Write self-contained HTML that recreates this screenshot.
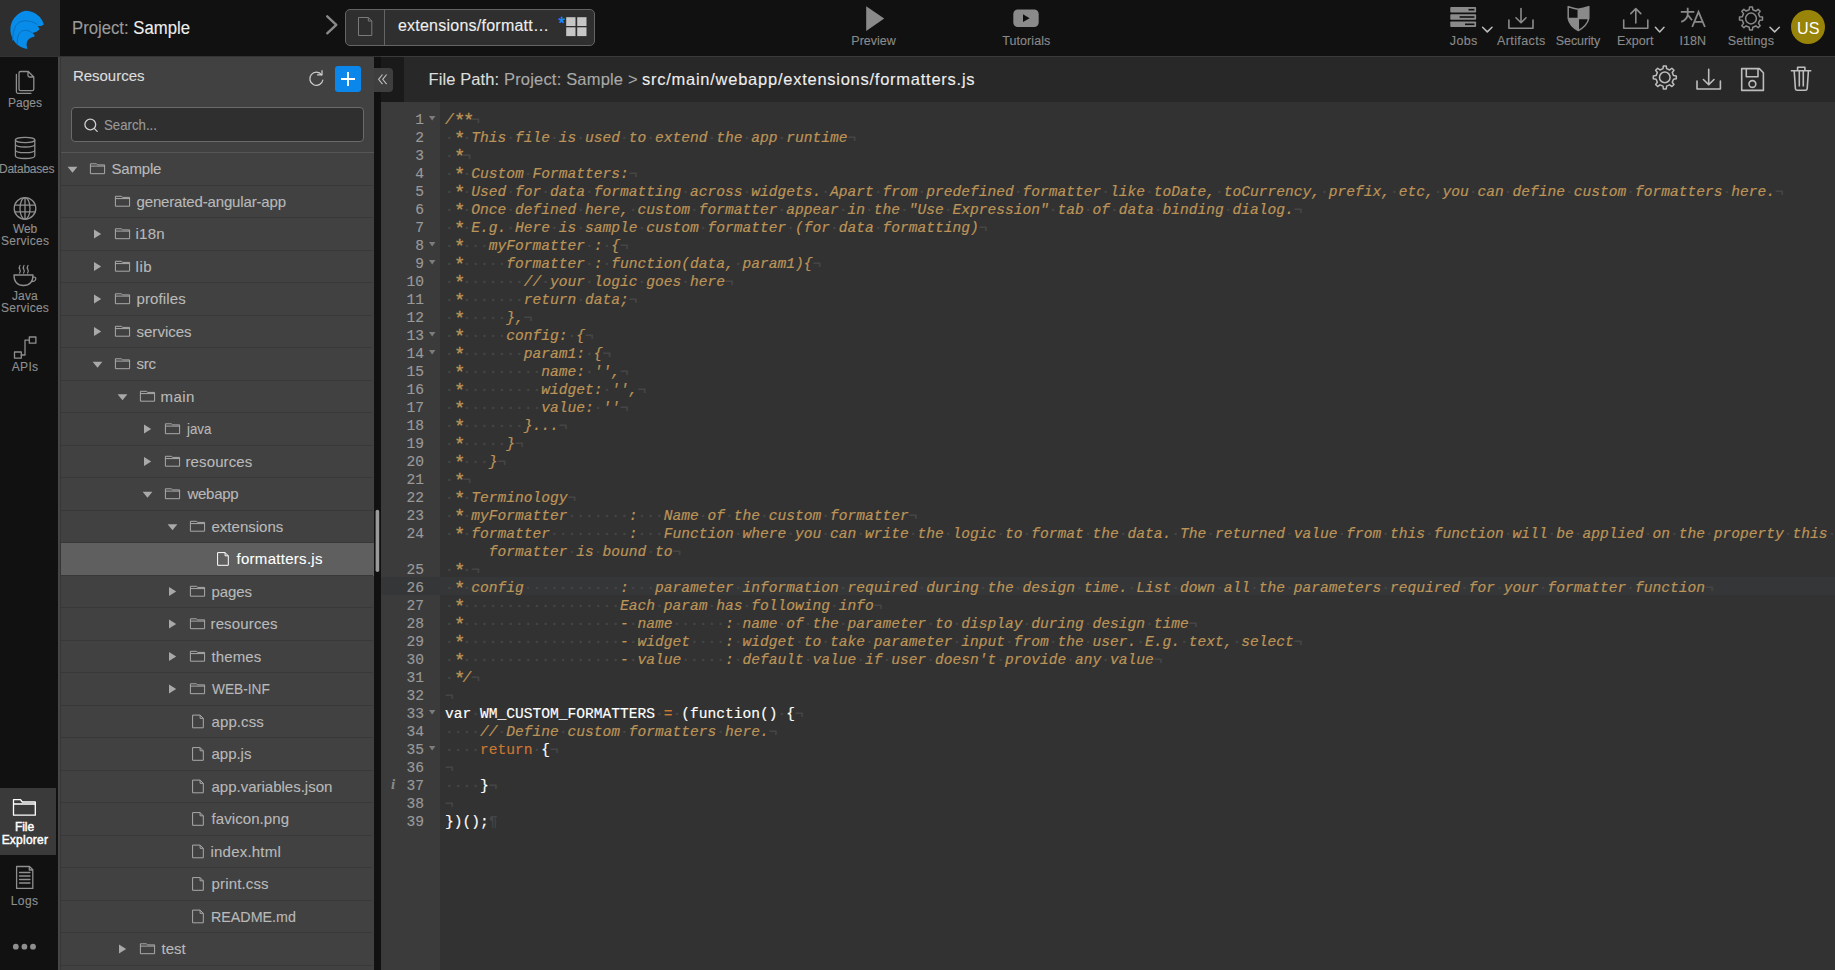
<!DOCTYPE html><html><head><meta charset="utf-8"><style>
html,body{margin:0;padding:0}
body{width:1835px;height:970px;overflow:hidden;position:relative;background:#111;font-family:"Liberation Sans",sans-serif}
body>div,body>svg{position:absolute}
.t{white-space:pre;line-height:1;-webkit-text-stroke:0.12px currentColor}
.c{position:absolute;left:445px;white-space:pre;font-family:"Liberation Mono",monospace;font-size:14.58px;line-height:18px;height:18px;color:#fff;-webkit-text-stroke:0.15px currentColor}
.cm{color:#BC9458;font-style:italic;-webkit-text-stroke:0.2px #BC9458}
.kw{color:#CC7833;-webkit-text-stroke:0.15px #CC7833}
.iv{color:#454545;font-style:normal;font-weight:bold;-webkit-text-stroke:0}
.as{display:inline-block;width:8.75px;font-style:normal;transform:translate(1.3px,1px) scale(1.3)}
.ln{position:absolute;left:381px;width:43px;text-align:right;font-family:"Liberation Mono",monospace;font-size:14.58px;line-height:18px;height:18px;color:#999;-webkit-text-stroke:0.15px #999}
</style></head><body>
<div style="left:0px;top:0px;width:1835px;height:56px;background:#111111;"></div>
<div style="left:0px;top:0px;width:60px;height:56px;background:#2e2e2e;"></div>
<div style="left:0px;top:56px;width:1835px;height:1px;background:#333333;"></div>
<div style="left:381px;top:56px;width:1454px;height:1px;background:#3a3a3a;"></div>
<div style="left:0px;top:57px;width:58px;height:913px;background:#111111;"></div>
<div style="left:58px;top:57px;width:2px;height:913px;background:#464646;"></div>
<div style="left:60px;top:57px;width:314px;height:913px;background:#414141;"></div>
<div style="left:60px;top:57px;width:1px;height:913px;background:#363636;"></div>
<div style="left:374px;top:57px;width:7px;height:913px;background:#111111;"></div>
<div style="left:381px;top:57px;width:23px;height:45px;background:#1a1a1a;"></div>
<div style="left:404px;top:57px;width:1431px;height:45px;background:#282828;"></div>
<div style="left:381px;top:102px;width:59px;height:868px;background:#3b3b3b;"></div>
<div style="left:440px;top:102px;width:1395px;height:868px;background:#323232;"></div>
<div class="t" style="left:72.07px;top:18.56px;font-size:18px;color:#eeeeee;letter-spacing:0.000px;transform:scaleX(0.9282);transform-origin:0 0;"><span style="color:#9a9a9a">Project: </span>Sample</div>
<div style="left:345px;top:9px;width:248px;height:35px;border:1px solid #646464;border-radius:5px;background:#2f2f2f;box-sizing:content-box"></div>
<div style="left:384px;top:10px;width:1px;height:35px;background:#646464;"></div>
<div class="t" style="left:397.90px;top:18.16px;font-size:16px;color:#eeeeee;letter-spacing:0.243px;">extensions/formatt…</div>
<div class="t" style="left:851.30px;top:35.22px;font-size:12.5px;color:#8a8a8a;letter-spacing:0.012px;">Preview</div>
<div class="t" style="left:1002.20px;top:35.22px;font-size:12.5px;color:#8a8a8a;letter-spacing:0.085px;">Tutorials</div>
<div class="t" style="left:1449.80px;top:34.92px;font-size:12.5px;color:#8a8a8a;letter-spacing:0.349px;">Jobs</div>
<div class="t" style="left:1497.00px;top:34.92px;font-size:12.5px;color:#8a8a8a;letter-spacing:0.388px;">Artifacts</div>
<div class="t" style="left:1555.80px;top:34.92px;font-size:12.5px;color:#8a8a8a;letter-spacing:-0.101px;">Security</div>
<div class="t" style="left:1617.00px;top:34.92px;font-size:12.5px;color:#8a8a8a;letter-spacing:0.069px;">Export</div>
<div class="t" style="left:1679.50px;top:34.92px;font-size:12.5px;color:#8a8a8a;letter-spacing:0.041px;">I18N</div>
<div class="t" style="left:1727.70px;top:34.92px;font-size:12.5px;color:#8a8a8a;letter-spacing:0.155px;">Settings</div>
<div style="left:1791px;top:10px;width:34px;height:34px;border-radius:50%;background:#988408"></div>
<div class="t" style="left:1796.62px;top:19.73px;font-size:16.5px;color:#ffffff;letter-spacing:0.000px;transform:scaleX(0.9765);transform-origin:0 0;-webkit-text-stroke:0">US</div>
<div class="t" style="left:72.90px;top:68.40px;font-size:15px;color:#dddddd;letter-spacing:-0.012px;">Resources</div>
<div style="left:71px;top:107px;width:291px;height:33px;border:1px solid #6a6a6a;border-radius:4px;background:#2f2f2f"></div>
<div class="t" style="left:104.00px;top:117.73px;font-size:14.5px;color:#9a9a9a;letter-spacing:0.000px;transform:scaleX(0.9123);transform-origin:0 0;">Search...</div>
<div style="left:335px;top:66px;width:26px;height:26px;border-radius:3px;background:#0b86ea"></div>
<div style="left:374px;top:68px;width:19px;height:24px;border-radius:0 4px 4px 0;background:#3e3e3e"></div>
<div style="left:61px;top:152px;width:313px;height:1px;background:#555555;"></div>
<div class="t" style="left:428.50px;top:70.83px;font-size:16.5px;color:#dddddd;letter-spacing:0.110px;">File Path:</div>
<div class="t" style="left:504.00px;top:70.83px;font-size:16.5px;color:#a8a8a8;letter-spacing:0.184px;">Project: Sample &gt;</div>
<div class="t" style="left:642.00px;top:70.83px;font-size:16.5px;color:#eeeeee;letter-spacing:0.744px;">src/main/webapp/extensions/formatters.js</div>
<div class="t" style="left:8.00px;top:96.84px;font-size:12px;color:#8f8f8f;letter-spacing:-0.006px;">Pages</div>
<div class="t" style="left:-1.00px;top:162.74px;font-size:12px;color:#8f8f8f;letter-spacing:-0.234px;">Databases</div>
<div class="t" style="left:13.00px;top:222.74px;font-size:12px;color:#8f8f8f;letter-spacing:-0.192px;">Web</div>
<div class="t" style="left:0.90px;top:234.64px;font-size:12px;color:#8f8f8f;letter-spacing:0.298px;">Services</div>
<div class="t" style="left:12.00px;top:290.04px;font-size:12px;color:#8f8f8f;letter-spacing:0.109px;">Java</div>
<div class="t" style="left:1.10px;top:301.84px;font-size:12px;color:#8f8f8f;letter-spacing:0.241px;">Services</div>
<div class="t" style="left:11.80px;top:361.44px;font-size:12px;color:#8f8f8f;letter-spacing:0.286px;">APIs</div>
<div style="left:0px;top:788px;width:56px;height:67px;background:#3a3a3a;"></div>
<div class="t" style="left:14.90px;top:821.44px;font-size:12px;color:#ffffff;letter-spacing:-0.021px;-webkit-text-stroke:0.45px #fff">File</div>
<div class="t" style="left:1.65px;top:833.74px;font-size:12px;color:#ffffff;letter-spacing:0.223px;-webkit-text-stroke:0.45px #fff">Explorer</div>
<div class="t" style="left:10.70px;top:894.84px;font-size:12px;color:#8f8f8f;letter-spacing:0.426px;">Logs</div>
<div style="left:61px;top:185px;width:312px;height:1px;background:#383838;"></div>
<div class="t" style="left:111.50px;top:161.10px;font-size:15px;color:#b9b9b9;letter-spacing:-0.183px;">Sample</div>
<div style="left:61px;top:217px;width:312px;height:1px;background:#383838;"></div>
<div class="t" style="left:136.50px;top:193.60px;font-size:15px;color:#b9b9b9;letter-spacing:-0.154px;">generated-angular-app</div>
<div style="left:61px;top:250px;width:312px;height:1px;background:#383838;"></div>
<div class="t" style="left:135.50px;top:226.10px;font-size:15px;color:#b9b9b9;letter-spacing:0.261px;">i18n</div>
<div style="left:61px;top:282px;width:312px;height:1px;background:#383838;"></div>
<div class="t" style="left:135.50px;top:258.60px;font-size:15px;color:#b9b9b9;letter-spacing:0.567px;">lib</div>
<div style="left:61px;top:315px;width:312px;height:1px;background:#383838;"></div>
<div class="t" style="left:136.50px;top:291.10px;font-size:15px;color:#b9b9b9;letter-spacing:0.121px;">profiles</div>
<div style="left:61px;top:347px;width:312px;height:1px;background:#383838;"></div>
<div class="t" style="left:136.50px;top:323.60px;font-size:15px;color:#b9b9b9;letter-spacing:0.013px;">services</div>
<div style="left:61px;top:380px;width:312px;height:1px;background:#383838;"></div>
<div class="t" style="left:136.50px;top:356.10px;font-size:15px;color:#b9b9b9;letter-spacing:-0.298px;">src</div>
<div style="left:61px;top:412px;width:312px;height:1px;background:#383838;"></div>
<div class="t" style="left:160.50px;top:388.60px;font-size:15px;color:#b9b9b9;letter-spacing:0.477px;">main</div>
<div style="left:61px;top:445px;width:312px;height:1px;background:#383838;"></div>
<div class="t" style="left:187.38px;top:421.10px;font-size:15px;color:#b9b9b9;letter-spacing:0.000px;transform:scaleX(0.8843);transform-origin:0 0;">java</div>
<div style="left:61px;top:477px;width:312px;height:1px;background:#383838;"></div>
<div class="t" style="left:185.50px;top:453.60px;font-size:15px;color:#b9b9b9;letter-spacing:0.118px;">resources</div>
<div style="left:61px;top:510px;width:312px;height:1px;background:#383838;"></div>
<div class="t" style="left:187.50px;top:486.10px;font-size:15px;color:#b9b9b9;letter-spacing:-0.280px;">webapp</div>
<div style="left:61px;top:542px;width:312px;height:1px;background:#383838;"></div>
<div class="t" style="left:211.50px;top:518.60px;font-size:15px;color:#b9b9b9;letter-spacing:0.010px;">extensions</div>
<div style="left:61px;top:543px;width:313px;height:33px;background:#5f5f5f;"></div>
<div style="left:61px;top:575px;width:312px;height:1px;background:#383838;"></div>
<div class="t" style="left:236.50px;top:551.10px;font-size:15px;color:#ffffff;letter-spacing:0.290px;">formatters.js</div>
<div style="left:61px;top:607px;width:312px;height:1px;background:#383838;"></div>
<div class="t" style="left:211.50px;top:583.60px;font-size:15px;color:#b9b9b9;letter-spacing:-0.092px;">pages</div>
<div style="left:61px;top:640px;width:312px;height:1px;background:#383838;"></div>
<div class="t" style="left:210.50px;top:616.10px;font-size:15px;color:#b9b9b9;letter-spacing:0.143px;">resources</div>
<div style="left:61px;top:672px;width:312px;height:1px;background:#383838;"></div>
<div class="t" style="left:211.50px;top:648.60px;font-size:15px;color:#b9b9b9;letter-spacing:0.102px;">themes</div>
<div style="left:61px;top:705px;width:312px;height:1px;background:#383838;"></div>
<div class="t" style="left:211.50px;top:681.10px;font-size:15px;color:#b9b9b9;letter-spacing:0.000px;transform:scaleX(0.9119);transform-origin:0 0;">WEB-INF</div>
<div style="left:61px;top:737px;width:312px;height:1px;background:#383838;"></div>
<div class="t" style="left:211.50px;top:713.60px;font-size:15px;color:#b9b9b9;letter-spacing:0.101px;">app.css</div>
<div style="left:61px;top:770px;width:312px;height:1px;background:#383838;"></div>
<div class="t" style="left:211.50px;top:746.10px;font-size:15px;color:#b9b9b9;letter-spacing:-0.025px;">app.js</div>
<div style="left:61px;top:802px;width:312px;height:1px;background:#383838;"></div>
<div class="t" style="left:211.50px;top:778.60px;font-size:15px;color:#b9b9b9;letter-spacing:-0.004px;">app.variables.json</div>
<div style="left:61px;top:835px;width:312px;height:1px;background:#383838;"></div>
<div class="t" style="left:211.50px;top:811.10px;font-size:15px;color:#b9b9b9;letter-spacing:0.082px;">favicon.png</div>
<div style="left:61px;top:867px;width:312px;height:1px;background:#383838;"></div>
<div class="t" style="left:210.50px;top:843.60px;font-size:15px;color:#b9b9b9;letter-spacing:0.208px;">index.html</div>
<div style="left:61px;top:900px;width:312px;height:1px;background:#383838;"></div>
<div class="t" style="left:211.50px;top:876.10px;font-size:15px;color:#b9b9b9;letter-spacing:0.157px;">print.css</div>
<div style="left:61px;top:932px;width:312px;height:1px;background:#383838;"></div>
<div class="t" style="left:210.55px;top:908.60px;font-size:15px;color:#b9b9b9;letter-spacing:0.000px;transform:scaleX(0.9518);transform-origin:0 0;">README.md</div>
<div style="left:61px;top:965px;width:312px;height:1px;background:#383838;"></div>
<div class="t" style="left:161.50px;top:941.10px;font-size:15px;color:#b9b9b9;letter-spacing:-0.037px;">test</div>
<div class="ln" style="top:111px">1</div>
<div class="c" style="top:111px"><span class="cm">/<i class="as">*</i><i class="as">*</i></span><i class="iv">¬</i></div>
<div class="ln" style="top:129px">2</div>
<div class="c" style="top:129px"><span class="cm"><i class="iv">·</i><i class="as">*</i><i class="iv">·</i>This<i class="iv">·</i>file<i class="iv">·</i>is<i class="iv">·</i>used<i class="iv">·</i>to<i class="iv">·</i>extend<i class="iv">·</i>the<i class="iv">·</i>app<i class="iv">·</i>runtime</span><i class="iv">¬</i></div>
<div class="ln" style="top:147px">3</div>
<div class="c" style="top:147px"><span class="cm"><i class="iv">·</i><i class="as">*</i></span><i class="iv">¬</i></div>
<div class="ln" style="top:165px">4</div>
<div class="c" style="top:165px"><span class="cm"><i class="iv">·</i><i class="as">*</i><i class="iv">·</i>Custom<i class="iv">·</i>Formatters:</span><i class="iv">¬</i></div>
<div class="ln" style="top:183px">5</div>
<div class="c" style="top:183px"><span class="cm"><i class="iv">·</i><i class="as">*</i><i class="iv">·</i>Used<i class="iv">·</i>for<i class="iv">·</i>data<i class="iv">·</i>formatting<i class="iv">·</i>across<i class="iv">·</i>widgets.<i class="iv">·</i>Apart<i class="iv">·</i>from<i class="iv">·</i>predefined<i class="iv">·</i>formatter<i class="iv">·</i>like<i class="iv">·</i>toDate,<i class="iv">·</i>toCurrency,<i class="iv">·</i>prefix,<i class="iv">·</i>etc,<i class="iv">·</i>you<i class="iv">·</i>can<i class="iv">·</i>define<i class="iv">·</i>custom<i class="iv">·</i>formatters<i class="iv">·</i>here.</span><i class="iv">¬</i></div>
<div class="ln" style="top:201px">6</div>
<div class="c" style="top:201px"><span class="cm"><i class="iv">·</i><i class="as">*</i><i class="iv">·</i>Once<i class="iv">·</i>defined<i class="iv">·</i>here,<i class="iv">·</i>custom<i class="iv">·</i>formatter<i class="iv">·</i>appear<i class="iv">·</i>in<i class="iv">·</i>the<i class="iv">·</i>&quot;Use<i class="iv">·</i>Expression&quot;<i class="iv">·</i>tab<i class="iv">·</i>of<i class="iv">·</i>data<i class="iv">·</i>binding<i class="iv">·</i>dialog.</span><i class="iv">¬</i></div>
<div class="ln" style="top:219px">7</div>
<div class="c" style="top:219px"><span class="cm"><i class="iv">·</i><i class="as">*</i><i class="iv">·</i>E.g.<i class="iv">·</i>Here<i class="iv">·</i>is<i class="iv">·</i>sample<i class="iv">·</i>custom<i class="iv">·</i>formatter<i class="iv">·</i>(for<i class="iv">·</i>data<i class="iv">·</i>formatting)</span><i class="iv">¬</i></div>
<div class="ln" style="top:237px">8</div>
<div class="c" style="top:237px"><span class="cm"><i class="iv">·</i><i class="as">*</i><i class="iv">·</i><i class="iv">·</i><i class="iv">·</i>myFormatter<i class="iv">·</i>:<i class="iv">·</i>{</span><i class="iv">¬</i></div>
<div class="ln" style="top:255px">9</div>
<div class="c" style="top:255px"><span class="cm"><i class="iv">·</i><i class="as">*</i><i class="iv">·</i><i class="iv">·</i><i class="iv">·</i><i class="iv">·</i><i class="iv">·</i>formatter<i class="iv">·</i>:<i class="iv">·</i>function(data,<i class="iv">·</i>param1){</span><i class="iv">¬</i></div>
<div class="ln" style="top:273px">10</div>
<div class="c" style="top:273px"><span class="cm"><i class="iv">·</i><i class="as">*</i><i class="iv">·</i><i class="iv">·</i><i class="iv">·</i><i class="iv">·</i><i class="iv">·</i><i class="iv">·</i><i class="iv">·</i>//<i class="iv">·</i>your<i class="iv">·</i>logic<i class="iv">·</i>goes<i class="iv">·</i>here</span><i class="iv">¬</i></div>
<div class="ln" style="top:291px">11</div>
<div class="c" style="top:291px"><span class="cm"><i class="iv">·</i><i class="as">*</i><i class="iv">·</i><i class="iv">·</i><i class="iv">·</i><i class="iv">·</i><i class="iv">·</i><i class="iv">·</i><i class="iv">·</i>return<i class="iv">·</i>data;</span><i class="iv">¬</i></div>
<div class="ln" style="top:309px">12</div>
<div class="c" style="top:309px"><span class="cm"><i class="iv">·</i><i class="as">*</i><i class="iv">·</i><i class="iv">·</i><i class="iv">·</i><i class="iv">·</i><i class="iv">·</i>},</span><i class="iv">¬</i></div>
<div class="ln" style="top:327px">13</div>
<div class="c" style="top:327px"><span class="cm"><i class="iv">·</i><i class="as">*</i><i class="iv">·</i><i class="iv">·</i><i class="iv">·</i><i class="iv">·</i><i class="iv">·</i>config:<i class="iv">·</i>{</span><i class="iv">¬</i></div>
<div class="ln" style="top:345px">14</div>
<div class="c" style="top:345px"><span class="cm"><i class="iv">·</i><i class="as">*</i><i class="iv">·</i><i class="iv">·</i><i class="iv">·</i><i class="iv">·</i><i class="iv">·</i><i class="iv">·</i><i class="iv">·</i>param1:<i class="iv">·</i>{</span><i class="iv">¬</i></div>
<div class="ln" style="top:363px">15</div>
<div class="c" style="top:363px"><span class="cm"><i class="iv">·</i><i class="as">*</i><i class="iv">·</i><i class="iv">·</i><i class="iv">·</i><i class="iv">·</i><i class="iv">·</i><i class="iv">·</i><i class="iv">·</i><i class="iv">·</i><i class="iv">·</i>name:<i class="iv">·</i>&#x27;&#x27;,</span><i class="iv">¬</i></div>
<div class="ln" style="top:381px">16</div>
<div class="c" style="top:381px"><span class="cm"><i class="iv">·</i><i class="as">*</i><i class="iv">·</i><i class="iv">·</i><i class="iv">·</i><i class="iv">·</i><i class="iv">·</i><i class="iv">·</i><i class="iv">·</i><i class="iv">·</i><i class="iv">·</i>widget:<i class="iv">·</i>&#x27;&#x27;,</span><i class="iv">¬</i></div>
<div class="ln" style="top:399px">17</div>
<div class="c" style="top:399px"><span class="cm"><i class="iv">·</i><i class="as">*</i><i class="iv">·</i><i class="iv">·</i><i class="iv">·</i><i class="iv">·</i><i class="iv">·</i><i class="iv">·</i><i class="iv">·</i><i class="iv">·</i><i class="iv">·</i>value:<i class="iv">·</i>&#x27;&#x27;</span><i class="iv">¬</i></div>
<div class="ln" style="top:417px">18</div>
<div class="c" style="top:417px"><span class="cm"><i class="iv">·</i><i class="as">*</i><i class="iv">·</i><i class="iv">·</i><i class="iv">·</i><i class="iv">·</i><i class="iv">·</i><i class="iv">·</i><i class="iv">·</i>}...</span><i class="iv">¬</i></div>
<div class="ln" style="top:435px">19</div>
<div class="c" style="top:435px"><span class="cm"><i class="iv">·</i><i class="as">*</i><i class="iv">·</i><i class="iv">·</i><i class="iv">·</i><i class="iv">·</i><i class="iv">·</i>}</span><i class="iv">¬</i></div>
<div class="ln" style="top:453px">20</div>
<div class="c" style="top:453px"><span class="cm"><i class="iv">·</i><i class="as">*</i><i class="iv">·</i><i class="iv">·</i><i class="iv">·</i>}</span><i class="iv">¬</i></div>
<div class="ln" style="top:471px">21</div>
<div class="c" style="top:471px"><span class="cm"><i class="iv">·</i><i class="as">*</i></span><i class="iv">¬</i></div>
<div class="ln" style="top:489px">22</div>
<div class="c" style="top:489px"><span class="cm"><i class="iv">·</i><i class="as">*</i><i class="iv">·</i>Terminology</span><i class="iv">¬</i></div>
<div class="ln" style="top:507px">23</div>
<div class="c" style="top:507px"><span class="cm"><i class="iv">·</i><i class="as">*</i><i class="iv">·</i>myFormatter<i class="iv">·</i><i class="iv">·</i><i class="iv">·</i><i class="iv">·</i><i class="iv">·</i><i class="iv">·</i><i class="iv">·</i>:<i class="iv">·</i><i class="iv">·</i><i class="iv">·</i>Name<i class="iv">·</i>of<i class="iv">·</i>the<i class="iv">·</i>custom<i class="iv">·</i>formatter</span><i class="iv">¬</i></div>
<div class="ln" style="top:525px">24</div>
<div class="c" style="top:525px"><span class="cm"><i class="iv">·</i><i class="as">*</i><i class="iv">·</i>formatter<i class="iv">·</i><i class="iv">·</i><i class="iv">·</i><i class="iv">·</i><i class="iv">·</i><i class="iv">·</i><i class="iv">·</i><i class="iv">·</i><i class="iv">·</i>:<i class="iv">·</i><i class="iv">·</i><i class="iv">·</i>Function<i class="iv">·</i>where<i class="iv">·</i>you<i class="iv">·</i>can<i class="iv">·</i>write<i class="iv">·</i>the<i class="iv">·</i>logic<i class="iv">·</i>to<i class="iv">·</i>format<i class="iv">·</i>the<i class="iv">·</i>data.<i class="iv">·</i>The<i class="iv">·</i>returned<i class="iv">·</i>value<i class="iv">·</i>from<i class="iv">·</i>this<i class="iv">·</i>function<i class="iv">·</i>will<i class="iv">·</i>be<i class="iv">·</i>applied<i class="iv">·</i>on<i class="iv">·</i>the<i class="iv">·</i>property<i class="iv">·</i>this<i class="iv">·</i></span></div>
<div class="c" style="top:543px;left:488.75px"><span class="cm">formatter<i class="iv">·</i>is<i class="iv">·</i>bound<i class="iv">·</i>to</span><i class="iv">¬</i></div>
<div class="ln" style="top:561px">25</div>
<div class="c" style="top:561px"><span class="cm"><i class="iv">·</i><i class="as">*</i><i class="iv">·</i></span><i class="iv">¬</i></div>
<div style="left:440px;top:577.4px;width:1395px;height:17.2px;background:#353637;"></div>
<div style="left:381px;top:577.4px;width:59px;height:17.2px;background:#353637;"></div>
<div class="ln" style="top:579px">26</div>
<div class="c" style="top:579px"><span class="cm"><i class="iv">·</i><i class="as">*</i><i class="iv">·</i>config<i class="iv">·</i><i class="iv">·</i><i class="iv">·</i><i class="iv">·</i><i class="iv">·</i><i class="iv">·</i><i class="iv">·</i><i class="iv">·</i><i class="iv">·</i><i class="iv">·</i><i class="iv">·</i>:<i class="iv">·</i><i class="iv">·</i><i class="iv">·</i>parameter<i class="iv">·</i>information<i class="iv">·</i>required<i class="iv">·</i>during<i class="iv">·</i>the<i class="iv">·</i>design<i class="iv">·</i>time.<i class="iv">·</i>List<i class="iv">·</i>down<i class="iv">·</i>all<i class="iv">·</i>the<i class="iv">·</i>parameters<i class="iv">·</i>required<i class="iv">·</i>for<i class="iv">·</i>your<i class="iv">·</i>formatter<i class="iv">·</i>function</span><i class="iv">¬</i></div>
<div class="ln" style="top:597px">27</div>
<div class="c" style="top:597px"><span class="cm"><i class="iv">·</i><i class="as">*</i><i class="iv">·</i><i class="iv">·</i><i class="iv">·</i><i class="iv">·</i><i class="iv">·</i><i class="iv">·</i><i class="iv">·</i><i class="iv">·</i><i class="iv">·</i><i class="iv">·</i><i class="iv">·</i><i class="iv">·</i><i class="iv">·</i><i class="iv">·</i><i class="iv">·</i><i class="iv">·</i><i class="iv">·</i><i class="iv">·</i>Each<i class="iv">·</i>param<i class="iv">·</i>has<i class="iv">·</i>following<i class="iv">·</i>info</span><i class="iv">¬</i></div>
<div class="ln" style="top:615px">28</div>
<div class="c" style="top:615px"><span class="cm"><i class="iv">·</i><i class="as">*</i><i class="iv">·</i><i class="iv">·</i><i class="iv">·</i><i class="iv">·</i><i class="iv">·</i><i class="iv">·</i><i class="iv">·</i><i class="iv">·</i><i class="iv">·</i><i class="iv">·</i><i class="iv">·</i><i class="iv">·</i><i class="iv">·</i><i class="iv">·</i><i class="iv">·</i><i class="iv">·</i><i class="iv">·</i><i class="iv">·</i>-<i class="iv">·</i>name<i class="iv">·</i><i class="iv">·</i><i class="iv">·</i><i class="iv">·</i><i class="iv">·</i><i class="iv">·</i>:<i class="iv">·</i>name<i class="iv">·</i>of<i class="iv">·</i>the<i class="iv">·</i>parameter<i class="iv">·</i>to<i class="iv">·</i>display<i class="iv">·</i>during<i class="iv">·</i>design<i class="iv">·</i>time</span><i class="iv">¬</i></div>
<div class="ln" style="top:633px">29</div>
<div class="c" style="top:633px"><span class="cm"><i class="iv">·</i><i class="as">*</i><i class="iv">·</i><i class="iv">·</i><i class="iv">·</i><i class="iv">·</i><i class="iv">·</i><i class="iv">·</i><i class="iv">·</i><i class="iv">·</i><i class="iv">·</i><i class="iv">·</i><i class="iv">·</i><i class="iv">·</i><i class="iv">·</i><i class="iv">·</i><i class="iv">·</i><i class="iv">·</i><i class="iv">·</i><i class="iv">·</i>-<i class="iv">·</i>widget<i class="iv">·</i><i class="iv">·</i><i class="iv">·</i><i class="iv">·</i>:<i class="iv">·</i>widget<i class="iv">·</i>to<i class="iv">·</i>take<i class="iv">·</i>parameter<i class="iv">·</i>input<i class="iv">·</i>from<i class="iv">·</i>the<i class="iv">·</i>user.<i class="iv">·</i>E.g.<i class="iv">·</i>text,<i class="iv">·</i>select</span><i class="iv">¬</i></div>
<div class="ln" style="top:651px">30</div>
<div class="c" style="top:651px"><span class="cm"><i class="iv">·</i><i class="as">*</i><i class="iv">·</i><i class="iv">·</i><i class="iv">·</i><i class="iv">·</i><i class="iv">·</i><i class="iv">·</i><i class="iv">·</i><i class="iv">·</i><i class="iv">·</i><i class="iv">·</i><i class="iv">·</i><i class="iv">·</i><i class="iv">·</i><i class="iv">·</i><i class="iv">·</i><i class="iv">·</i><i class="iv">·</i><i class="iv">·</i>-<i class="iv">·</i>value<i class="iv">·</i><i class="iv">·</i><i class="iv">·</i><i class="iv">·</i><i class="iv">·</i>:<i class="iv">·</i>default<i class="iv">·</i>value<i class="iv">·</i>if<i class="iv">·</i>user<i class="iv">·</i>doesn&#x27;t<i class="iv">·</i>provide<i class="iv">·</i>any<i class="iv">·</i>value</span><i class="iv">¬</i></div>
<div class="ln" style="top:669px">31</div>
<div class="c" style="top:669px"><span class="cm"><i class="iv">·</i><i class="as">*</i>/</span><i class="iv">¬</i></div>
<div class="ln" style="top:687px">32</div>
<div class="c" style="top:687px"><i class="iv">¬</i></div>
<div class="ln" style="top:705px">33</div>
<div class="c" style="top:705px">var<i class="iv">·</i>WM_CUSTOM_FORMATTERS<i class="iv">·</i><span class="kw">=</span><i class="iv">·</i>(function()<i class="iv">·</i>{<i class="iv">¬</i></div>
<div class="ln" style="top:723px">34</div>
<div class="c" style="top:723px"><i class="iv">·</i><i class="iv">·</i><i class="iv">·</i><i class="iv">·</i><span class="cm">//<i class="iv">·</i>Define<i class="iv">·</i>custom<i class="iv">·</i>formatters<i class="iv">·</i>here.</span><i class="iv">¬</i></div>
<div class="ln" style="top:741px">35</div>
<div class="c" style="top:741px"><i class="iv">·</i><i class="iv">·</i><i class="iv">·</i><i class="iv">·</i><span class="kw">return</span><i class="iv">·</i>{<i class="iv">¬</i></div>
<div class="ln" style="top:759px">36</div>
<div class="c" style="top:759px"><i class="iv">¬</i></div>
<div class="ln" style="top:777px">37</div>
<div class="c" style="top:777px"><i class="iv">·</i><i class="iv">·</i><i class="iv">·</i><i class="iv">·</i>}<i class="iv">¬</i></div>
<div class="ln" style="top:795px">38</div>
<div class="c" style="top:795px"><i class="iv">¬</i></div>
<div class="ln" style="top:813px">39</div>
<div class="c" style="top:813px">})();<i class="iv">¶</i></div>
<svg style="left:0;top:0" width="1835" height="970" viewBox="0 0 1835 970"><path d="M25.2,10.8 A19.4,19.4 0 0 1 43.9,24.4 Q41.5,26.3 37.5,26.3 Q40,27.8 39.3,29.8 Q36.5,32.5 32.3,33 Q35,34.3 34.6,36.5 Q29,37.5 27,41.5 Q25.8,45.5 27.4,48.9 A19.4,19.4 0 0 1 25.2,10.8Z" fill="#078ce9"/><path d="M12.4,40.6 Q13,21 24,20.8 Q32,20.6 37.3,24.6 M17.2,44.2 Q16.5,30.5 25,30.2 Q29.5,30.2 32.3,32.9" fill="none" stroke="#0a6cb8" stroke-width="0.9"/><polyline points="327.2,16.3 336.3,24.8 327.2,33.3" fill="none" stroke="#8a8a8a" stroke-width="2.4" stroke-linecap="round" stroke-linejoin="round"/><path d="M358.5,17.5 H368.3 L371.8,21 V35.5 H358.5 Z M368.3,17.5 V21 H371.8" fill="none" stroke="#7a7a7a" stroke-width="1"/><rect x="566.2" y="17.2" width="9.3" height="8.8" fill="#c6c6c6"/><rect x="577.2" y="17.2" width="9.3" height="8.8" fill="#c6c6c6"/><rect x="566.2" y="27.3" width="9.3" height="8.8" fill="#c6c6c6"/><rect x="577.2" y="27.3" width="9.3" height="8.8" fill="#c6c6c6"/><text x="558.6" y="29" font-family="Liberation Sans" font-size="16.5" stroke="#1a8cff" stroke-width="0.4" fill="#1a8cff">*</text><path d="M866.2,6.2 L884.2,18.6 L866.2,31 Z" fill="#8a8a8a"/><rect x="1013.3" y="9.5" width="25.4" height="17.5" rx="4.5" fill="#8a8a8a"/><path d="M1023,14.3 L1029.6,18.2 L1023,22.1Z" fill="#0f0f0f"/><rect x="1450.3" y="6.9" width="25.8" height="5.6" rx="0.8" fill="#8a8a8a"/><rect x="1468.5" y="8.9" width="5.900000000000091" height="1.6" fill="#0f0f0f"/><rect x="1450.3" y="14.2" width="25.8" height="5.6" rx="0.8" fill="#8a8a8a"/><rect x="1459.6" y="16.2" width="14.800000000000182" height="1.6" fill="#0f0f0f"/><rect x="1450.3" y="21.5" width="25.8" height="5.6" rx="0.8" fill="#8a8a8a"/><rect x="1465.0" y="23.5" width="9.400000000000091" height="1.6" fill="#0f0f0f"/><polyline points="1482.6,27.3 1487.3,31.9 1492,27.3" fill="none" stroke="#bdbdbd" stroke-width="1.5" stroke-linecap="round" stroke-linejoin="round"/><polyline points="1655.4,27.3 1659.7,31.9 1664,27.3" fill="none" stroke="#bdbdbd" stroke-width="1.5" stroke-linecap="round" stroke-linejoin="round"/><polyline points="1770,27.3 1774.65,31.9 1779.3,27.3" fill="none" stroke="#bdbdbd" stroke-width="1.5" stroke-linecap="round" stroke-linejoin="round"/><path d="M1521,8.5 V22.8 M1516,17.8 L1521,22.8 L1526,17.8 M1508.9,20 V28.2 H1533 V20" fill="none" stroke="#8a8a8a" stroke-width="1.6" stroke-linecap="round" stroke-linejoin="round"/><path d="M1578.3,9.6 V30.4 Q1570,25 1568.4,18.4 H1578.3Z" fill="none"/><path d="M1578.3,9.3 Q1583,8.5 1588.8,6.6 V18.4 H1578.3Z" fill="#8a8a8a"/><path d="M1568.2,18.4 H1578.3 V30.6 Q1570,26 1568.2,18.4Z" fill="#8a8a8a"/><path d="M1568.2,6.6 Q1573.5,8.5 1578.3,9.3 Q1583,8.5 1588.8,6.6 V18.4 Q1587,26 1578.3,30.6 Q1569.6,26 1568.2,18.4 Z M1578.3,9.3 V30.6 M1568.2,18.4 H1588.8" fill="none" stroke="#8a8a8a" stroke-width="1.5" stroke-linejoin="round"/><path d="M1635.8,8.6 V23 M1630.8,13.6 L1635.8,8.6 L1640.8,13.6 M1623.7,20 V28.2 H1647.8 V20" fill="none" stroke="#8a8a8a" stroke-width="1.6" stroke-linecap="round" stroke-linejoin="round"/><path d="M1680.8,11.9 H1694.3 M1687.7,7.8 V15 Q1686.5,20 1681.2,21.8 M1688.3,15.5 L1692,20.3 M1692.2,27 L1698.5,11.9 L1704.9,27 M1694.3,21.8 H1702.8" fill="none" stroke="#8a8a8a" stroke-width="1.8"/><path d="M1749.20,9.78 L1749.55,6.99 L1752.45,6.99 L1752.80,9.78 L1755.89,11.06 L1758.11,9.33 L1760.17,11.39 L1758.44,13.61 L1759.72,16.70 L1762.51,17.05 L1762.51,19.95 L1759.72,20.30 L1758.44,23.39 L1760.17,25.61 L1758.11,27.67 L1755.89,25.94 L1752.80,27.22 L1752.45,30.01 L1749.55,30.01 L1749.20,27.22 L1746.11,25.94 L1743.89,27.67 L1741.83,25.61 L1743.56,23.39 L1742.28,20.30 L1739.49,19.95 L1739.49,17.05 L1742.28,16.70 L1743.56,13.61 L1741.83,11.39 L1743.89,9.33 L1746.11,11.06Z" fill="none" stroke="#8a8a8a" stroke-width="1.5" stroke-linejoin="round"/><circle cx="1751" cy="18.5" r="5.4" fill="none" stroke="#8a8a8a" stroke-width="1.5"/><path d="M19,73 Q19,71.5 20.5,71.5 H28.3 L33.8,77 V89 Q33.8,90.6 32.2,90.6 H20.5 Q19,90.6 19,89 Z M28,71.8 V75.5 Q28,77 29.5,77 H33.6 M16.4,74.5 V91.8 Q16.4,93.3 17.9,93.3 H31" fill="none" stroke="#8f8f8f" stroke-width="1.3" stroke-linejoin="round" stroke-linecap="round"/><ellipse cx="25.1" cy="140" rx="9.7" ry="2.6" fill="none" stroke="#8f8f8f" stroke-width="1.3" stroke-linejoin="round" stroke-linecap="round"/><path d="M15.4,140 V155.8 Q15.4,158.5 25.1,158.5 Q34.8,158.5 34.8,155.8 V140 M15.4,144.3 Q15.4,147 25.1,147 Q34.8,147 34.8,144.3 M15.4,149.9 Q15.4,152.6 25.1,152.6 Q34.8,152.6 34.8,149.9" fill="none" stroke="#8f8f8f" stroke-width="1.3" stroke-linejoin="round" stroke-linecap="round"/><circle cx="25" cy="208.4" r="10.8" fill="none" stroke="#8f8f8f" stroke-width="1.3" stroke-linejoin="round" stroke-linecap="round"/><ellipse cx="25" cy="208.4" rx="5" ry="10.8" fill="none" stroke="#8f8f8f" stroke-width="1.3" stroke-linejoin="round" stroke-linecap="round"/><path d="M25,197.6 V219.2 M14.8,205.2 H35.2 M14.8,211.8 H35.2" fill="none" stroke="#8f8f8f" stroke-width="1.3" stroke-linejoin="round" stroke-linecap="round"/><path d="M20,265.5 Q18.6,267.5 19.8,269.3 Q21,271 19.6,273 M24,265.5 Q22.6,267.5 23.8,269.3 Q25,271 23.6,273 M28,265.5 Q26.6,267.5 27.8,269.3 Q29,271 27.6,273" fill="none" stroke="#8f8f8f" stroke-width="1.3" stroke-linejoin="round" stroke-linecap="round"/><path d="M14,275 H33 Q33,285.5 23.5,285.5 Q14,285.5 14,275 Z M32.6,277.2 Q36,276.5 35.8,279 Q35.5,281.5 31.5,281.5" fill="none" stroke="#8f8f8f" stroke-width="1.3" stroke-linejoin="round" stroke-linecap="round"/><rect x="14.5" y="352" width="6.8" height="6.2" fill="none" stroke="#8f8f8f" stroke-width="1.3" stroke-linejoin="round" stroke-linecap="round"/><rect x="29.3" y="337" width="6.6" height="6.2" fill="none" stroke="#8f8f8f" stroke-width="1.3" stroke-linejoin="round" stroke-linecap="round"/><path d="M21.3,355 H25 V340.1 H29.3" fill="none" stroke="#8f8f8f" stroke-width="1.3" stroke-linejoin="round" stroke-linecap="round"/><path d="M13.5,799.6 H20.5 L22.3,802 H35.3 V815.2 H13.5 Z M13.5,804 H35.3" fill="none" stroke="#ffffff" stroke-width="1.3" stroke-linejoin="round"/><path d="M16.6,866.5 H29.5 L32.8,869.8 V888.4 H16.6 Z M29.3,866.8 V870 H32.6 M19.5,872.5 H30 M19.5,876 H30 M19.5,879.5 H30 M19.5,883 H30" fill="none" stroke="#8f8f8f" stroke-width="1.3" stroke-linejoin="round" stroke-linecap="round"/><circle cx="15.8" cy="946.7" r="2.9" fill="#8f8f8f"/><circle cx="24.4" cy="946.7" r="2.9" fill="#8f8f8f"/><circle cx="33" cy="946.7" r="2.9" fill="#8f8f8f"/><path d="M321.7,74.8 A6.6,6.6 0 1 0 322.9,80" fill="none" stroke="#cfcfcf" stroke-width="1.2" stroke-linecap="round"/><path d="M317.5,74.8 H322 V70.5" fill="none" stroke="#cfcfcf" stroke-width="1.2" stroke-linecap="round" stroke-linejoin="round"/><path d="M348,72 V86 M341,79 H355" stroke="#ffffff" stroke-width="1.8"/><path d="M382.5,74.5 L378.6,79.3 L382.5,84.1 M386.6,74.5 L382.7,79.3 L386.6,84.1" fill="none" stroke="#bdbdbd" stroke-width="1.1"/><circle cx="90.3" cy="124.5" r="5.4" fill="none" stroke="#cfcfcf" stroke-width="1.3"/><path d="M94.2,128.4 L97.2,131.4" stroke="#cfcfcf" stroke-width="1.3" stroke-linecap="round"/><rect x="375.6" y="509.8" width="3.6" height="62.2" rx="1.8" fill="#9a9a9a"/><path d="M1663.00,68.68 L1663.35,65.89 L1666.25,65.89 L1666.60,68.68 L1669.69,69.96 L1671.91,68.23 L1673.97,70.29 L1672.24,72.51 L1673.52,75.60 L1676.31,75.95 L1676.31,78.85 L1673.52,79.20 L1672.24,82.29 L1673.97,84.51 L1671.91,86.57 L1669.69,84.84 L1666.60,86.12 L1666.25,88.91 L1663.35,88.91 L1663.00,86.12 L1659.91,84.84 L1657.69,86.57 L1655.63,84.51 L1657.36,82.29 L1656.08,79.20 L1653.29,78.85 L1653.29,75.95 L1656.08,75.60 L1657.36,72.51 L1655.63,70.29 L1657.69,68.23 L1659.91,69.96Z" fill="none" stroke="#bdbdbd" stroke-width="1.5" stroke-linejoin="round"/><circle cx="1664.8" cy="77.4" r="5.3" fill="none" stroke="#bdbdbd" stroke-width="1.5"/><path d="M1708.7,69.3 V84.8 M1703.4,79.5 L1708.7,84.8 L1714,79.5 M1697,81 V89 H1720.4 V81" fill="none" stroke="#bdbdbd" stroke-width="1.6" stroke-linecap="round" stroke-linejoin="round"/><path d="M1741.7,68.6 H1759.3 L1763.4,72.7 V90.4 H1741.7 Z M1746.3,68.6 V76.8 H1758 V68.6" fill="none" stroke="#bdbdbd" stroke-width="1.6" stroke-linejoin="round"/><circle cx="1752.4" cy="84" r="3.4" fill="none" stroke="#bdbdbd" stroke-width="1.6"/><path d="M1790.8,70.8 H1811.3 M1797.6,70.8 V67.2 H1804.9 V70.8 M1794.2,71 L1795.4,88.6 Q1795.6,90.2 1797.2,90.2 H1805.4 Q1807,90.2 1807.2,88.6 L1808.4,71 M1799.3,71.5 V86.4 M1803.3,71.5 V86.4" fill="none" stroke="#bdbdbd" stroke-width="1.6" stroke-linejoin="round"/><path d="M429,116 L435.4,116 L432.2,120.4Z" fill="#7c7c7c"/><path d="M429,242 L435.4,242 L432.2,246.4Z" fill="#7c7c7c"/><path d="M429,260 L435.4,260 L432.2,264.4Z" fill="#7c7c7c"/><path d="M429,332 L435.4,332 L432.2,336.4Z" fill="#7c7c7c"/><path d="M429,350 L435.4,350 L432.2,354.4Z" fill="#7c7c7c"/><path d="M429,710 L435.4,710 L432.2,714.4Z" fill="#7c7c7c"/><path d="M429,746 L435.4,746 L432.2,750.4Z" fill="#7c7c7c"/><text x="391" y="789" font-family="Liberation Serif" font-style="italic" font-weight="bold" font-size="15" fill="#8a8a8a">i</text><path d="M67.6,166.8 H77.4 L72.5,172.8Z" fill="#a9a9a9"/><path d="M90.4,173.7 V163.8 H96.3 L97.8,164.9 H104.6 V173.7 Z M90.4,166.1 H104.6" fill="none" stroke="#a9a9a9" stroke-width="1" stroke-linejoin="round"/><path d="M115.4,206.2 V196.3 H121.3 L122.8,197.4 H129.6 V206.2 Z M115.4,198.6 H129.6" fill="none" stroke="#a9a9a9" stroke-width="1" stroke-linejoin="round"/><path d="M94.0,229.4 L101.2,234.0 L94.0,238.6Z" fill="#a9a9a9"/><path d="M115.4,238.7 V228.8 H121.3 L122.8,229.9 H129.6 V238.7 Z M115.4,231.1 H129.6" fill="none" stroke="#a9a9a9" stroke-width="1" stroke-linejoin="round"/><path d="M94.0,261.9 L101.2,266.5 L94.0,271.1Z" fill="#a9a9a9"/><path d="M115.4,271.2 V261.3 H121.3 L122.8,262.4 H129.6 V271.2 Z M115.4,263.6 H129.6" fill="none" stroke="#a9a9a9" stroke-width="1" stroke-linejoin="round"/><path d="M94.0,294.4 L101.2,299.0 L94.0,303.6Z" fill="#a9a9a9"/><path d="M115.4,303.7 V293.8 H121.3 L122.8,294.9 H129.6 V303.7 Z M115.4,296.1 H129.6" fill="none" stroke="#a9a9a9" stroke-width="1" stroke-linejoin="round"/><path d="M94.0,326.9 L101.2,331.5 L94.0,336.1Z" fill="#a9a9a9"/><path d="M115.4,336.2 V326.3 H121.3 L122.8,327.4 H129.6 V336.2 Z M115.4,328.6 H129.6" fill="none" stroke="#a9a9a9" stroke-width="1" stroke-linejoin="round"/><path d="M92.6,361.8 H102.4 L97.5,367.8Z" fill="#a9a9a9"/><path d="M115.4,368.7 V358.8 H121.3 L122.8,359.9 H129.6 V368.7 Z M115.4,361.1 H129.6" fill="none" stroke="#a9a9a9" stroke-width="1" stroke-linejoin="round"/><path d="M117.6,394.3 H127.4 L122.5,400.3Z" fill="#a9a9a9"/><path d="M140.4,401.2 V391.3 H146.3 L147.8,392.4 H154.6 V401.2 Z M140.4,393.6 H154.6" fill="none" stroke="#a9a9a9" stroke-width="1" stroke-linejoin="round"/><path d="M144.0,424.4 L151.2,429.0 L144.0,433.6Z" fill="#a9a9a9"/><path d="M165.4,433.7 V423.8 H171.3 L172.8,424.9 H179.6 V433.7 Z M165.4,426.1 H179.6" fill="none" stroke="#a9a9a9" stroke-width="1" stroke-linejoin="round"/><path d="M144.0,456.9 L151.2,461.5 L144.0,466.1Z" fill="#a9a9a9"/><path d="M165.4,466.2 V456.3 H171.3 L172.8,457.4 H179.6 V466.2 Z M165.4,458.6 H179.6" fill="none" stroke="#a9a9a9" stroke-width="1" stroke-linejoin="round"/><path d="M142.6,491.8 H152.4 L147.5,497.8Z" fill="#a9a9a9"/><path d="M165.4,498.7 V488.8 H171.3 L172.8,489.9 H179.6 V498.7 Z M165.4,491.1 H179.6" fill="none" stroke="#a9a9a9" stroke-width="1" stroke-linejoin="round"/><path d="M167.6,524.3 H177.4 L172.5,530.3Z" fill="#a9a9a9"/><path d="M190.4,531.2 V521.3 H196.3 L197.8,522.4 H204.6 V531.2 Z M190.4,523.6 H204.6" fill="none" stroke="#a9a9a9" stroke-width="1" stroke-linejoin="round"/><path d="M217.6,552.6 H225.1 L228.29999999999998,555.8 V565.3 H217.6 Z M225.1,552.6 V555.8 H228.29999999999998" fill="none" stroke="#ffffff" stroke-width="1" stroke-linejoin="round"/><path d="M169.0,586.9 L176.2,591.5 L169.0,596.1Z" fill="#a9a9a9"/><path d="M190.4,596.2 V586.3 H196.3 L197.8,587.4 H204.6 V596.2 Z M190.4,588.6 H204.6" fill="none" stroke="#a9a9a9" stroke-width="1" stroke-linejoin="round"/><path d="M169.0,619.4 L176.2,624.0 L169.0,628.6Z" fill="#a9a9a9"/><path d="M190.4,628.7 V618.8 H196.3 L197.8,619.9 H204.6 V628.7 Z M190.4,621.1 H204.6" fill="none" stroke="#a9a9a9" stroke-width="1" stroke-linejoin="round"/><path d="M169.0,651.9 L176.2,656.5 L169.0,661.1Z" fill="#a9a9a9"/><path d="M190.4,661.2 V651.3 H196.3 L197.8,652.4 H204.6 V661.2 Z M190.4,653.6 H204.6" fill="none" stroke="#a9a9a9" stroke-width="1" stroke-linejoin="round"/><path d="M169.0,684.4 L176.2,689.0 L169.0,693.6Z" fill="#a9a9a9"/><path d="M190.4,693.7 V683.8 H196.3 L197.8,684.9 H204.6 V693.7 Z M190.4,686.1 H204.6" fill="none" stroke="#a9a9a9" stroke-width="1" stroke-linejoin="round"/><path d="M192.6,715.1 H200.1 L203.29999999999998,718.3 V727.8 H192.6 Z M200.1,715.1 V718.3 H203.29999999999998" fill="none" stroke="#a9a9a9" stroke-width="1" stroke-linejoin="round"/><path d="M192.6,747.6 H200.1 L203.29999999999998,750.8 V760.3 H192.6 Z M200.1,747.6 V750.8 H203.29999999999998" fill="none" stroke="#a9a9a9" stroke-width="1" stroke-linejoin="round"/><path d="M192.6,780.1 H200.1 L203.29999999999998,783.3 V792.8 H192.6 Z M200.1,780.1 V783.3 H203.29999999999998" fill="none" stroke="#a9a9a9" stroke-width="1" stroke-linejoin="round"/><path d="M192.6,812.6 H200.1 L203.29999999999998,815.8 V825.3 H192.6 Z M200.1,812.6 V815.8 H203.29999999999998" fill="none" stroke="#a9a9a9" stroke-width="1" stroke-linejoin="round"/><path d="M192.6,845.1 H200.1 L203.29999999999998,848.3 V857.8 H192.6 Z M200.1,845.1 V848.3 H203.29999999999998" fill="none" stroke="#a9a9a9" stroke-width="1" stroke-linejoin="round"/><path d="M192.6,877.6 H200.1 L203.29999999999998,880.8 V890.3 H192.6 Z M200.1,877.6 V880.8 H203.29999999999998" fill="none" stroke="#a9a9a9" stroke-width="1" stroke-linejoin="round"/><path d="M192.6,910.1 H200.1 L203.29999999999998,913.3 V922.8 H192.6 Z M200.1,910.1 V913.3 H203.29999999999998" fill="none" stroke="#a9a9a9" stroke-width="1" stroke-linejoin="round"/><path d="M119.0,944.4 L126.2,949.0 L119.0,953.6Z" fill="#a9a9a9"/><path d="M140.4,953.7 V943.8 H146.3 L147.8,944.9 H154.6 V953.7 Z M140.4,946.1 H154.6" fill="none" stroke="#a9a9a9" stroke-width="1" stroke-linejoin="round"/></svg>
</body></html>
